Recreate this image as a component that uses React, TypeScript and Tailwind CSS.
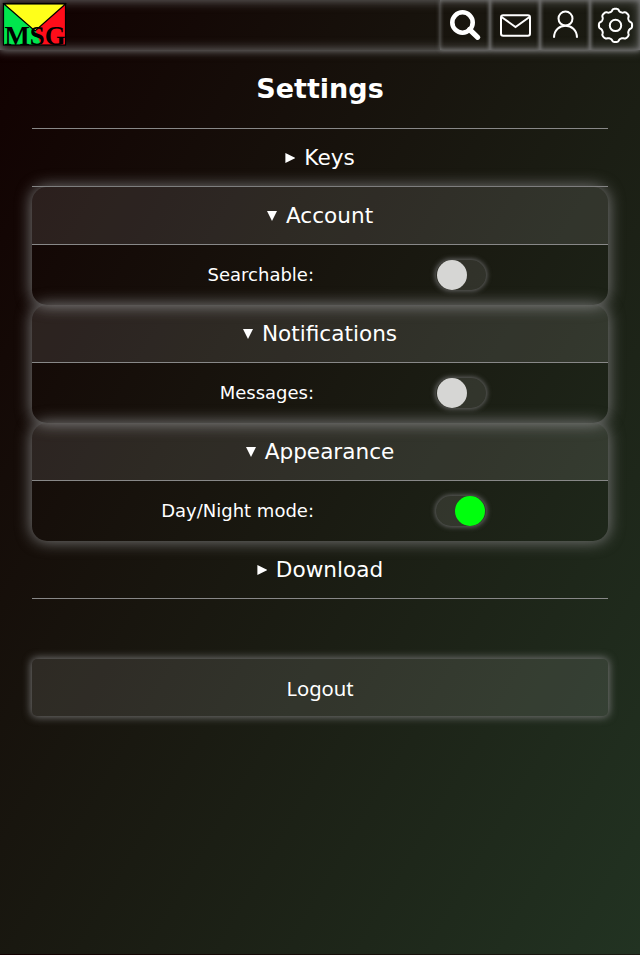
import type { ReactNode } from "react";

// Outline of the gear: a circle with eight soft, flat-topped teeth.
const gearPoints = Array.from({ length: 192 }, (_, i) => {
  const angle = (i / 192) * Math.PI * 2;
  const radius = 15.4 + 1.25 * Math.tanh(1.8 * Math.cos(8 * angle) + 0.3);
  return `${(25.5 + radius * Math.cos(angle)).toFixed(2)},${(25.4 + radius * Math.sin(angle)).toFixed(2)}`;
}).join(" ");

function NavButton({ children, label }: { children: ReactNode; label: string }) {
  return (
    <button
      aria-label={label}
      className="flex h-[50px] w-[50px] items-center justify-center shadow-[0_0_4px_0_#777,inset_0_0_4px_0_#777]"
    >
      {children}
    </button>
  );
}

function Logo() {
  return (
    <svg width="70" height="50" viewBox="0 0 70 50">
      <rect x="4" y="4" width="61.5" height="41" fill="#00e64d" />
      <path d="M65 4v41H41L35 29z" fill="#ff0d1a" />
      <path d="M4 4h61.5L35 31z" fill="#ffff1a" stroke="#000" strokeWidth="1.2" />
      <rect x="3.5" y="3.5" width="62" height="41.5" fill="none" stroke="#000" strokeWidth="1.2" />
      <text x="4.5" y="45" textLength="61" lengthAdjust="spacingAndGlyphs" fontFamily="Liberation Serif, serif" fontWeight="bold" fontSize="27.5">
        MSG
      </text>
    </svg>
  );
}

function Header() {
  return (
    <header className="flex h-[50px] justify-between shadow-[0_0_8px_1px_#777,inset_0_0_12px_0_#777]">
      <Logo />
      <nav className="flex">
        <NavButton label="Search">
          <svg width="50" height="50" viewBox="0 0 50 50" fill="none" stroke="#fff">
            <circle cx="22.5" cy="22.5" r="10.2" strokeWidth="4.6" />
            <path d="M29.5 29.5l8.2 7.8" strokeWidth="5.2" strokeLinecap="round" />
          </svg>
        </NavButton>
        <NavButton label="Messages">
          <svg width="50" height="50" viewBox="0 0 50 50" fill="none" stroke="#fff" strokeWidth="2">
            <rect x="11" y="15.3" width="29" height="20.4" rx="2.2" />
            <path d="M11.5 17l14 10 14-10" />
          </svg>
        </NavButton>
        <NavButton label="Profile">
          <svg width="50" height="50" viewBox="0 0 50 50" fill="none" stroke="#fff" strokeWidth="2">
            <circle cx="25.5" cy="18.6" r="7" />
            <path d="M14 37.7c0-16 23-16 23 0" />
          </svg>
        </NavButton>
        <NavButton label="Settings">
          <svg width="50" height="50" viewBox="0 0 50 50" fill="none" stroke="#fff" strokeWidth="2" strokeLinejoin="round">
            <circle cx="25.5" cy="25.4" r="5.7" />
            <polygon points={gearPoints} />
          </svg>
        </NavButton>
      </nav>
    </header>
  );
}

function Toggle({ on = false }: { on?: boolean }) {
  return (
    <span
      className={`flex h-[30px] w-[50px] rounded-full bg-white/10 px-px shadow-[0_0_5px_1px_#666] ${on ? "justify-end" : ""}`}
    >
      <span className={`size-[30px] rounded-full ${on ? "bg-[#00ff0d]" : "bg-[#d6d6d4]"}`} />
    </span>
  );
}

function SectionTitle({ title, open = false }: { title: string; open?: boolean }) {
  return (
    <div
      className={`flex h-[58px] items-center justify-center border-b border-[#888] pt-[2px] text-[21.6px] ${
        open ? "rounded-t-[15px] bg-white/10" : ""
      }`}
    >
      <svg width="10" height="10" viewBox="0 0 10 10" fill="#fff" className="mr-[9px] -mt-[2px]">
        {open ? <path d="M0 0h10L5 10z" /> : <path d="M0.4 0l10 5-10 5z" />}
      </svg>
      {title}
    </div>
  );
}

function Section({ title, label, on }: { title: string; label: string; on?: boolean }) {
  return (
    <section className="h-[118px] rounded-[15px] shadow-[0_0_15px_1px_#777]">
      <SectionTitle title={title} open />
      <div className="flex h-[60px] items-center">
        <span className="w-[282px] pb-[2px] text-right text-[18px]">{label}</span>
        <span className="ml-[122px]">
          <Toggle on={on} />
        </span>
      </div>
    </section>
  );
}

export default function App() {
  return (
    <div className="h-[955px] w-full overflow-hidden bg-[linear-gradient(120deg,#110000,#223322)] bg-[length:100%_954px] font-['DejaVu_Sans',sans-serif] text-white">
      <Header />
      <main className="px-8">
        <h1 className="flex h-[78px] items-center justify-center text-[27px] font-bold">Settings</h1>
        <div className="border-t border-[#888]">
          <SectionTitle title="Keys" />
          <Section title="Account" label="Searchable:" />
          <Section title="Notifications" label="Messages:" />
          <Section title="Appearance" label="Day/Night mode:" on />
          <SectionTitle title="Download" />
        </div>
        <button className="mt-[60px] h-[57px] w-full rounded-[5px] bg-white/10 pt-[2px] font-['Noto_Sans',sans-serif] text-[20.2px] shadow-[0_0_8px_1px_#777]">
          Logout
        </button>
      </main>
    </div>
  );
}
